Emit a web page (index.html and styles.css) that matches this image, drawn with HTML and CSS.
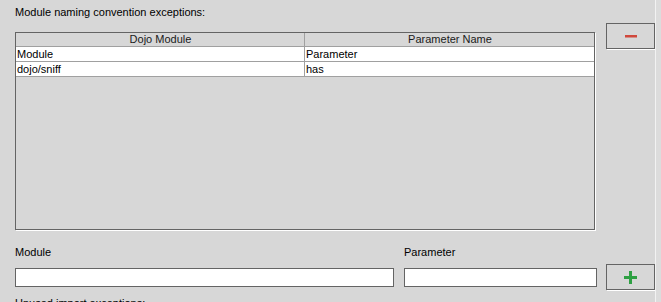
FILE: index.html
```html
<!DOCTYPE html>
<html>
<head>
<meta charset="utf-8">
<link rel="stylesheet" href="styles.css">
</head>
<body>
<div class="page">
  <div class="content">
    <section class="top">
      <div class="title">Module naming convention exceptions:</div>
      <div class="table">
        <div class="row head">
          <div class="cell">Dojo Module</div>
          <div class="cell">Parameter Name</div>
        </div>
        <div class="row body">
          <div class="cell">Module</div>
          <div class="cell">Parameter</div>
        </div>
        <div class="row body">
          <div class="cell">dojo/sniff</div>
          <div class="cell">has</div>
        </div>
      </div>
      <button class="btn btn-minus" type="button" aria-label="Remove">
        <svg width="12" height="3" viewBox="0 0 12 3"><rect x="0" y="0" width="12" height="2.5" fill="#d0483c"/></svg>
      </button>
    </section>
    <section class="bottom">
      <div class="field field-module">
        <label class="label">Module</label>
        <input class="input" type="text">
      </div>
      <div class="field field-param">
        <label class="label">Parameter</label>
        <input class="input" type="text">
      </div>
      <button class="btn btn-plus" type="button" aria-label="Add">
        <svg width="13" height="13" viewBox="0 0 13 13"><rect x="5" y="0" width="3" height="13" fill="#2ea043"/><rect x="0" y="5" width="13" height="3" fill="#2ea043"/></svg>
      </button>
    </section>
    <div class="title next">Unused import exceptions:</div>
  </div>
  <div class="edge"></div>
</div>
</body>
</html>
```
FILE: styles.css
```css
html, body {
  margin: 0;
  padding: 0;
  background: #d7d7d7;
  overflow: hidden;
}
body {
  font-family: "Liberation Sans", Arial, sans-serif;
  font-size: 11px;
  color: #000;
}
.page {
  display: flex;
  width: 661px;
  height: 302px;
}
.content {
  width: 656px;
  padding-left: 15px;
  box-sizing: border-box;
}
.edge {
  width: 5px;
  border-left: 1px solid #f2f2f2;
  background: #dcdcdc;
}
.top {
  display: grid;
  grid-template-columns: 580px 49px;
  grid-template-rows: 32px 198px;
  column-gap: 11px;
}
.title {
  line-height: 14px;
  padding-top: 5px;
  grid-column: 1;
  grid-row: 1;
}
.table {
  grid-column: 1;
  grid-row: 2;
  border: 1px solid #646464;
  box-shadow: 1px 1px 0 #fff;
  box-sizing: border-box;
  height: 198px;
  background: #d7d7d7;
}
.row {
  display: grid;
  grid-template-columns: 288px 1fr;
  border-bottom: 1px solid #a0a0a0;
}
.row .cell {
  padding-left: 1px;
  white-space: nowrap;
}
.row .cell + .cell {
  border-left: 1px solid #a0a0a0;
}
.head {
  height: 13px;
  line-height: 13px;
}
.head .cell {
  text-align: center;
  color: #1a1a1a;
}
.body {
  background: #fff;
  height: 14px;
  line-height: 14px;
}
.btn {
  width: 49px;
  height: 26px;
  padding: 0;
  background: #d7d7d7;
  border: 1px solid #646464;
  box-shadow: 1px 1px 0 #fff;
  display: flex;
  align-items: center;
  justify-content: center;
}
.btn-minus {
  grid-column: 2;
  grid-row: 1 / 3;
  margin-top: 23px;
  align-self: start;
}
.bottom {
  display: flex;
  align-items: flex-start;
  margin-top: 15px;
}
.field {
  display: flex;
  flex-direction: column;
}
.field-module {
  width: 379px;
  margin-right: 10px;
}
.field-param {
  width: 193px;
  margin-right: 9px;
}
.label {
  line-height: 14px;
  margin-bottom: 9px;
}
.input {
  height: 19px;
  box-sizing: border-box;
  border: 1px solid #646464;
  background: #fff;
  margin: 0;
  padding: 0 2px;
  font: inherit;
}
.btn-plus {
  margin-top: 19px;
}
.next {
  padding-top: 6px;
}
```
